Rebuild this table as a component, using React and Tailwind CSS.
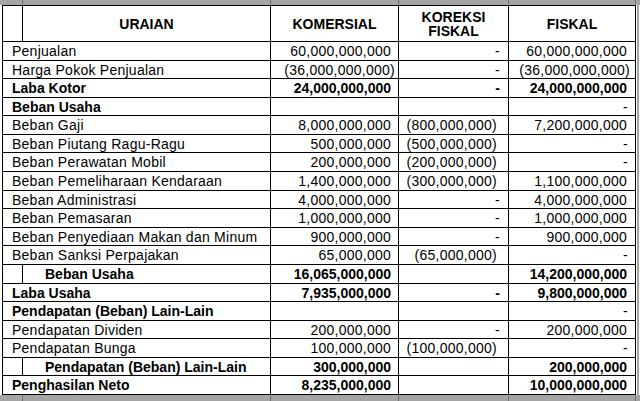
import React from "react";

const rows = [
  { label: "Penjualan", k: "60,000,000,000", r: "-", f: "60,000,000,000", h: "h-[19px]" },
  { label: "Harga Pokok Penjualan", k: "(36,000,000,000)", r: "-", f: "(36,000,000,000)", h: "h-[18px]" },
  { label: "Laba Kotor", bold: true, k: "24,000,000,000", r: "-", f: "24,000,000,000", h: "h-[19px]" },
  { label: "Beban Usaha", bold: true, k: "", r: "", f: "-", fRegular: true, h: "h-[18px]" },
  { label: "Beban Gaji", k: "8,000,000,000", r: "(800,000,000)", f: "7,200,000,000", h: "h-[19px]" },
  { label: "Beban Piutang Ragu-Ragu", k: "500,000,000", r: "(500,000,000)", f: "-", h: "h-[18px]" },
  { label: "Beban Perawatan Mobil", k: "200,000,000", r: "(200,000,000)", f: "-", h: "h-[19px]" },
  { label: "Beban Pemeliharaan Kendaraan", k: "1,400,000,000", r: "(300,000,000)", f: "1,100,000,000", h: "h-[19px]" },
  { label: "Beban Administrasi", k: "4,000,000,000", r: "-", f: "4,000,000,000", h: "h-[18px]" },
  { label: "Beban Pemasaran", k: "1,000,000,000", r: "-", f: "1,000,000,000", h: "h-[19px]" },
  { label: "Beban Penyediaan Makan dan Minum", k: "900,000,000", r: "-", f: "900,000,000", h: "h-[18px]" },
  { label: "Beban Sanksi Perpajakan", k: "65,000,000", r: "(65,000,000)", f: "-", h: "h-[19px]" },
  { label: "Beban Usaha", bold: true, indent: true, k: "16,065,000,000", r: "", f: "14,200,000,000", h: "h-[19px]" },
  { label: "Laba Usaha", bold: true, k: "7,935,000,000", r: "-", f: "9,800,000,000", h: "h-[18px]" },
  { label: "Pendapatan (Beban) Lain-Lain", bold: true, k: "", r: "", f: "-", fRegular: true, h: "h-[19px]" },
  { label: "Pendapatan Dividen", k: "200,000,000", r: "-", f: "200,000,000", h: "h-[18px]" },
  { label: "Pendapatan Bunga", k: "100,000,000", r: "(100,000,000)", f: "-", h: "h-[19px]" },
  { label: "Pendapatan (Beban) Lain-Lain", bold: true, indent: true, k: "300,000,000", r: "", f: "200,000,000", h: "h-[18px]" },
  { label: "Penghasilan Neto", bold: true, k: "8,235,000,000", r: "", f: "10,000,000,000", h: "h-[19px]" },
];

function kind(v) {
  if (v.startsWith("(")) return "paren";
  if (v === "-") return "dash";
  return "pos";
}

const padK = { pos: "pr-[7px]", paren: "pr-[3px]", dash: "pr-[7px]" };
const padR = { pos: "pr-[8px]", paren: "pr-[11px]", dash: "pr-[8px]" };
const padF = { pos: "pr-[8px]", paren: "pr-[5px]", dash: "pr-[7px]" };

function Num({ v, w, pads, bold }) {
  const p = pads[kind(v)];
  return (
    <div
      className={`${w} shrink-0 border-r border-black flex items-center justify-end whitespace-nowrap ${p} ${
        bold ? "font-bold" : "tracking-[0.25px]"
      }`}
    >
      {v}
    </div>
  );
}

export default function App() {
  return (
    <div className="w-[640px] h-[401px] bg-white overflow-hidden font-['Liberation_Sans',Arial,sans-serif] text-[14px] leading-[16px] text-black flex flex-col">
      {/* top grey strip */}
      <div className="h-[5px] shrink-0 flex bg-[#a5a5a5]">
        <div className="w-[23px] border-r border-[#6f6f6f]" />
        <div className="w-[248px] border-r border-[#6f6f6f]" />
        <div className="w-[128px] border-r border-[#6f6f6f]" />
        <div className="w-[110px] border-r border-[#6f6f6f]" />
        <div className="w-[127px] border-r border-[#6f6f6f]" />
        <div className="flex-1" />
      </div>

      <div className="flex shrink-0">
        <div className="w-[2px]" />
        <div className="w-[634px] border-l border-t border-black flex flex-col">
          {/* header */}
          <div className="h-[36px] flex border-b border-black font-bold">
            <div className="w-[20px] border-r border-black" />
            <div className="w-[248px] border-r border-black flex items-center justify-center">URAIAN</div>
            <div className="w-[128px] border-r border-black flex items-center justify-center">KOMERSIAL</div>
            <div className="w-[110px] border-r border-black flex flex-col items-center justify-center leading-[14px]">
              <span>KOREKSI</span>
              <span>FISKAL</span>
            </div>
            <div className="w-[127px] border-r border-black flex items-center justify-center">FISKAL</div>
          </div>

          {rows.map((row, i) => (
            <div key={i} className={`${row.h} flex border-b border-black`}>
              {row.indent ? (
                <>
                  <div className="w-[20px] shrink-0 border-r border-black" />
                  <div className="w-[248px] shrink-0 border-r border-black flex items-center pl-[22px] font-bold whitespace-nowrap">
                    {row.label}
                  </div>
                </>
              ) : (
                <div
                  className={`w-[268px] shrink-0 border-r border-black flex items-center pl-[9px] whitespace-nowrap ${
                    row.bold ? "font-bold" : "tracking-[0.25px]"
                  }`}
                >
                  {row.label}
                </div>
              )}
              <Num v={row.k} w="w-[128px]" pads={padK} bold={row.bold} />
              <Num v={row.r} w="w-[110px]" pads={padR} bold={row.bold} />
              <Num v={row.f} w="w-[127px]" pads={padF} bold={row.bold && !row.fRegular} />
            </div>
          ))}
        </div>
        <div className="w-[1px]" />
        <div className="w-[2px] bg-[#a5a5a5]" />
      </div>

      {/* bottom grey strip */}
      <div className="h-[6px] shrink-0 flex bg-[#a5a5a5]">
        <div className="w-[23px] border-r border-[#6f6f6f]" />
        <div className="w-[248px] border-r border-[#6f6f6f]" />
        <div className="w-[128px] border-r border-[#6f6f6f]" />
        <div className="w-[110px] border-r border-[#6f6f6f]" />
        <div className="w-[127px] border-r border-[#6f6f6f]" />
        <div className="flex-1" />
      </div>
    </div>
  );
}
